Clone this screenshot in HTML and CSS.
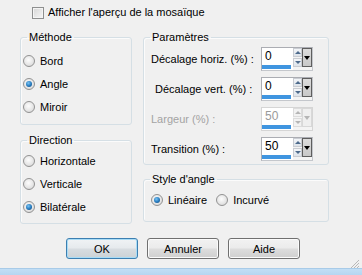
FILE: index.html
```html
<!DOCTYPE html>
<html>
<head>
<meta charset="utf-8">
<link rel="stylesheet" href="styles.css">
</head>
<body>
<div class="dlg">
  <div class="top"><span class="cb"></span><span>Afficher l'aperçu de la mosaïque</span></div>
  <div class="cols">
    <div class="col left">
      <fieldset class="grp methode">
        <legend>Méthode</legend>
        <div class="opt"><span class="radio"></span>Bord</div>
        <div class="opt"><span class="radio on"></span>Angle</div>
        <div class="opt"><span class="radio"></span>Miroir</div>
      </fieldset>
      <fieldset class="grp direction">
        <legend>Direction</legend>
        <div class="opt"><span class="radio"></span>Horizontale</div>
        <div class="opt"><span class="radio"></span>Verticale</div>
        <div class="opt"><span class="radio on"></span>Bilatérale</div>
      </fieldset>
    </div>
    <div class="col right">
      <fieldset class="grp params">
        <legend>Paramètres</legend>
        <div class="prow"><span class="plabel">Décalage horiz. (%) :</span>
          <div class="spin"><div class="field"><span class="val">0</span><span class="bar"></span></div><div class="arrows"><span class="ab up"></span><span class="ab dn"></span></div><div class="drop"></div></div>
        </div>
        <div class="prow"><span class="plabel indent">Décalage vert. (%) :</span>
          <div class="spin"><div class="field"><span class="val">0</span><span class="bar"></span></div><div class="arrows"><span class="ab up"></span><span class="ab dn"></span></div><div class="drop"></div></div>
        </div>
        <div class="prow disabled"><span class="plabel">Largeur (%) :</span>
          <div class="spin"><div class="field"><span class="val">50</span><span class="bar"></span></div><div class="arrows"><span class="ab up"></span><span class="ab dn"></span></div><div class="drop"></div></div>
        </div>
        <div class="prow"><span class="plabel">Transition (%) :</span>
          <div class="spin"><div class="field"><span class="val">50</span><span class="bar"></span></div><div class="arrows"><span class="ab up"></span><span class="ab dn"></span></div><div class="drop"></div></div>
        </div>
      </fieldset>
      <fieldset class="grp style">
        <legend>Style d'angle</legend>
        <div class="hopts">
          <div class="opt"><span class="radio on"></span>Linéaire</div>
          <div class="opt"><span class="radio"></span>Incurvé</div>
        </div>
      </fieldset>
    </div>
  </div>
  <div class="buttons">
    <div class="btn default">OK</div>
    <div class="btn">Annuler</div>
    <div class="btn">Aide</div>
  </div>
  <div class="griprow">
    <svg class="grip" width="10" height="9" viewBox="0 0 10 9">
      <path d="M9 1 L1 9 M9 4 L4 9 M9 7 L7 9" stroke="#b8b8b8" stroke-width="1" fill="none"/>
    </svg>
  </div>
  <div class="band"></div>
</div>
</body>
</html>
```

FILE: styles.css
```css
html, body {
  margin: 0;
  padding: 0;
}
body {
  font-family: "Liberation Sans", Arial, sans-serif;
  font-size: 11px;
  color: #000;
  background: #f0f0f0;
}
.dlg {
  width: 362px;
  height: 275px;
  background: #f0f0f0;
  display: flex;
  flex-direction: column;
  overflow: hidden;
}
.top {
  height: 31px;
  box-sizing: border-box;
  padding: 6px 0 0 32px;
  display: flex;
  align-items: flex-start;
  line-height: 13px;
}
.cb {
  width: 12px;
  height: 12px;
  box-sizing: border-box;
  border: 1px solid #8e8f8f;
  background: linear-gradient(135deg, #d6d6d6, #f6f6f6);
  box-shadow: inset 0 0 0 1px #f4f4f4;
  margin-top: 1px;
  margin-right: 4px;
}
.cols {
  display: flex;
  gap: 11px;
  padding-left: 20px;
}
.col {
  display: flex;
  flex-direction: column;
}
.left { width: 112px; }
.right { width: 186px; }
.grp {
  margin: 0;
  border: 1px solid #d5dfe5;
  border-radius: 3px;
  box-shadow: inset 1px 1px 0 #fbfbfb;
  min-width: 0;
}
.grp legend {
  padding: 0 2px;
  line-height: 13px;
}
.left .grp {
  padding: 0 0 0 2px;
}
.left .grp legend { margin-left: 4px; }
.methode { padding-top: 5px !important; padding-bottom: 6px !important; }
.direction { margin-top: 9px; padding-top: 2px !important; padding-bottom: 5px !important; }
.opt {
  height: 23px;
  display: flex;
  align-items: center;
  gap: 5px;
}
.radio {
  width: 12px;
  height: 12px;
  box-sizing: border-box;
  border-radius: 50%;
  border: 1px solid #929292;
  background: radial-gradient(circle at 45% 40%, #fdfdfd 0%, #e6e6e6 55%, #cfcfcf 100%);
  display: flex;
  align-items: center;
  justify-content: center;
  flex: none;
}
.radio.on::after {
  content: "";
  width: 6px;
  height: 6px;
  border-radius: 50%;
  background: radial-gradient(circle at 40% 35%, #7ac4f4 0%, #2a7fc2 50%, #0c3f72 100%);
}
.right .grp {
  padding: 0 0 0 7px;
}
.right .grp legend { margin-left: -1px; }
.params { padding-top: 3px !important; padding-bottom: 3px !important; }
.prow {
  display: flex;
  align-items: center;
  height: 24px;
  margin-bottom: 6px;
}
.prow:last-child { margin-bottom: 0; }
.plabel {
  width: 110px;
  flex: none;
}
.plabel.indent { padding-left: 4px; box-sizing: border-box; }
.spin {
  display: flex;
  width: 52px;
  height: 24px;
  box-sizing: border-box;
  border: 1px solid #c4c7cc;
  border-left-color: #abadb3;
  border-top-color: #abadb3;
  background: #f4f4f4;
}
.field {
  width: 31px;
  background: #fff;
  display: flex;
  flex-direction: column;
}
.val {
  padding: 2px 0 0 3px;
  line-height: 12px;
  font-size: 12px;
}
.bar {
  margin-top: auto;
  margin-bottom: 1px;
  width: 29px;
  height: 4px;
  background: #3f95e0;
}
.arrows {
  width: 9px;
  height: 19px;
  margin-top: 0;
  display: flex;
  flex-direction: column;
  gap: 1px;
}
.ab {
  flex: 1;
  box-sizing: border-box;
  border: 1px solid #c9ccd2;
  background: linear-gradient(#f4f6f9, #dde3ea);
  display: flex;
  align-items: center;
  justify-content: center;
}
.ab::after {
  content: "";
  width: 0;
  height: 0;
  border-left: 3px solid transparent;
  border-right: 3px solid transparent;
}
.up::after { border-bottom: 3px solid #4d6a8c; }
.dn::after { border-top: 3px solid #4d6a8c; }
.drop {
  width: 10px;
  height: 19px;
  box-sizing: border-box;
  border: 1px solid #5e5e5e;
  background: linear-gradient(#dcdcdc, #c8c8c8);
  display: flex;
  align-items: center;
  justify-content: center;
}
.drop::after {
  content: "";
  border-left: 3px solid transparent;
  border-right: 3px solid transparent;
  border-top: 4px solid #000;
}
.disabled { color: #a3a3a3; }
.disabled .spin { border-color: #d5d5d5; }
.disabled .val { color: #9a9a9a; }
.disabled .ab { border-color: #dcdcdc; background: #f2f2f2; }
.disabled .up::after { border-bottom-color: #b5b5b5; }
.disabled .dn::after { border-top-color: #b5b5b5; }
.disabled .drop { border-color: #d8d8d8; background: #efefef; }
.disabled .drop::after { border-top-color: #b5b5b5; }
.style { margin-top: 8px; padding-top: 3px !important; padding-bottom: 10px !important; }
.hopts {
  display: flex;
  gap: 9px;
}
.hopts .opt { height: 22px; }
.buttons {
  margin-top: 14px;
  padding-left: 66px;
  display: flex;
  gap: 9px;
}
.btn {
  width: 72px;
  height: 21px;
  box-sizing: border-box;
  border: 1px solid #707070;
  border-radius: 3px;
  background: linear-gradient(#f2f2f2 0%, #ebebeb 48%, #dddddd 52%, #cfcfcf 100%);
  box-shadow: inset 0 0 0 1px #fbfbfb;
  display: flex;
  align-items: center;
  justify-content: center;
}
.btn.default {
  border-color: #3c7fb1;
  box-shadow: inset 0 0 0 1px #a9dcf6;
  background: linear-gradient(#f0f3f5 0%, #e6eaed 48%, #d8dde1 52%, #ccd2d6 100%);
}
.griprow {
  flex: 1;
  display: flex;
  justify-content: flex-end;
  align-items: flex-end;
  padding-right: 2px;
}
.band {
  height: 7px;
  background: linear-gradient(#c2def5, #b5d6f1);
  border-top: 1px solid #a8cbe8;
  box-sizing: border-box;
}
```
